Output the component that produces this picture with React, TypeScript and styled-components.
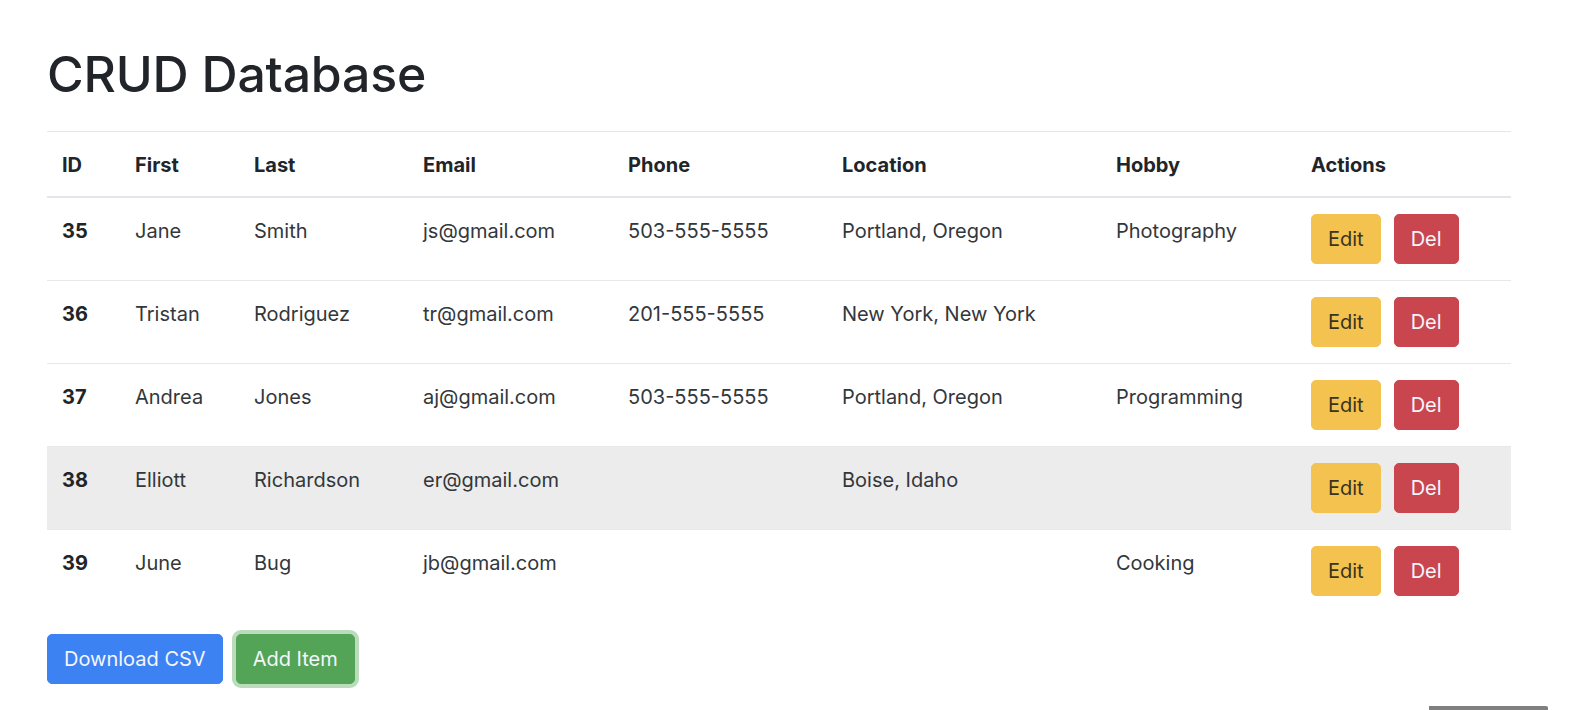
import React from "react";
import styled, { createGlobalStyle } from "styled-components";

const GlobalStyle = createGlobalStyle`
  html, body {
    margin: 0;
    padding: 0;
    background: #ffffff;
  }
  body {
    font-family: Inter, "Noto Sans", "Liberation Sans", sans-serif;
    color: #212529;
    overflow: hidden;
  }
`;

const Page = styled.div`
  width: 1572px;
  height: 710px;
  box-sizing: border-box;
  padding: 44px 61px 0 47px;
  position: relative;
`;

const Title = styled.h1`
  margin: 0 0 27px;
  font-size: 50px;
  line-height: 60px;
  font-weight: 500;
  color: #212529;
  letter-spacing: -0.2px;
`;

const Table = styled.table`
  width: 1464px;
  border-collapse: collapse;
  table-layout: fixed;
  margin-bottom: 22px;
  font-size: 20px;
  line-height: 30px;
  color: #2b2f33;
`;

const HeadCell = styled.th`
  text-align: left;
  vertical-align: bottom;
  padding: 18px 15px 16px;
  font-weight: 700;
  color: #212529;
  border-top: 1px solid #e3e6ea;
  border-bottom: 2px solid #e3e6ea;
`;

const Row = styled.tr<{ $hover?: boolean }>`
  background: ${(p) => (p.$hover ? "#ececec" : "transparent")};
`;

const Cell = styled.td<{ $bold?: boolean; $actions?: boolean }>`
  vertical-align: top;
  padding: ${(p) => (p.$actions ? "16px 15px" : "18px 15px 14px")};
  border-top: 1px solid #e6e8eb;
  font-weight: ${(p) => (p.$bold ? 700 : 400)};
  color: ${(p) => (p.$bold ? "#212529" : "#33373b")};
  white-space: nowrap;
`;

const Actions = styled.div`
  display: flex;
  gap: 13px;
`;

const colors = {
  warning: "#f4c24f",
  danger: "#c9464f",
  primary: "#3c82f3",
  success: "#53a457",
};

const Button = styled.button<{ $variant: keyof typeof colors; $focus?: boolean }>`
  font-family: inherit;
  font-size: 20px;
  line-height: 30px;
  font-weight: 400;
  padding: 9px 16px;
  border-radius: 5px;
  cursor: pointer;
  border: 1px solid ${(p) => colors[p.$variant]};
  background: ${(p) => colors[p.$variant]};
  color: ${(p) => (p.$variant === "warning" ? "#3a3320" : "#f3f6fb")};
  box-shadow: ${(p) => (p.$focus ? "0 0 0 4px rgba(83, 164, 87, 0.4)" : "none")};
`;

const Footer = styled.div`
  display: flex;
  gap: 13px;
`;

const ScrollHint = styled.div`
  position: absolute;
  left: 1429px;
  bottom: 0;
  width: 119px;
  height: 4px;
  background: #808080;
  border-top-right-radius: 2px;
`;

type Item = {
  id: number;
  first: string;
  last: string;
  email: string;
  phone: string;
  location: string;
  hobby: string;
};

const items: Item[] = [
  { id: 35, first: "Jane", last: "Smith", email: "js@gmail.com", phone: "503-555-5555", location: "Portland, Oregon", hobby: "Photography" },
  { id: 36, first: "Tristan", last: "Rodriguez", email: "tr@gmail.com", phone: "201-555-5555", location: "New York, New York", hobby: "" },
  { id: 37, first: "Andrea", last: "Jones", email: "aj@gmail.com", phone: "503-555-5555", location: "Portland, Oregon", hobby: "Programming" },
  { id: 38, first: "Elliott", last: "Richardson", email: "er@gmail.com", phone: "", location: "Boise, Idaho", hobby: "" },
  { id: 39, first: "June", last: "Bug", email: "jb@gmail.com", phone: "", location: "", hobby: "Cooking" },
];

const widths = [73, 119, 169, 205, 214, 274, 195, 215];
const headers = ["ID", "First", "Last", "Email", "Phone", "Location", "Hobby", "Actions"];

export default function App() {
  return (
    <>
      <GlobalStyle />
      <Page>
        <Title>CRUD Database</Title>
        <Table>
          <colgroup>
            {widths.map((w, i) => (
              <col key={i} style={{ width: w }} />
            ))}
          </colgroup>
          <thead>
            <tr>
              {headers.map((h) => (
                <HeadCell key={h}>{h}</HeadCell>
              ))}
            </tr>
          </thead>
          <tbody>
            {items.map((it) => (
              <Row key={it.id} $hover={it.id === 38}>
                <Cell $bold>{it.id}</Cell>
                <Cell>{it.first}</Cell>
                <Cell>{it.last}</Cell>
                <Cell>{it.email}</Cell>
                <Cell>{it.phone}</Cell>
                <Cell>{it.location}</Cell>
                <Cell>{it.hobby}</Cell>
                <Cell $actions>
                  <Actions>
                    <Button $variant="warning">Edit</Button>
                    <Button $variant="danger">Del</Button>
                  </Actions>
                </Cell>
              </Row>
            ))}
          </tbody>
        </Table>
        <Footer>
          <Button $variant="primary">Download CSV</Button>
          <Button $variant="success" $focus>
            Add Item
          </Button>
        </Footer>
        <ScrollHint />
      </Page>
    </>
  );
}
